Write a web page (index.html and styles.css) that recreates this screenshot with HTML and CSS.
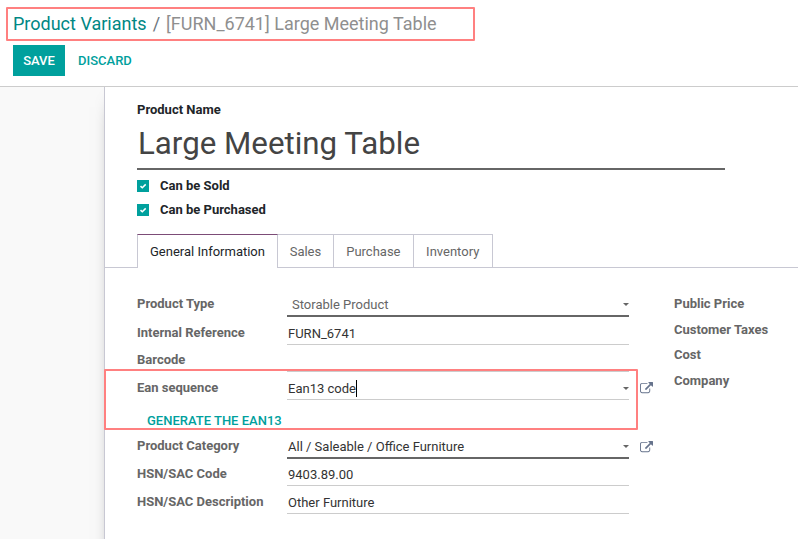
FILE: index.html
```html
<!DOCTYPE html>
<html lang="en">
<head>
<meta charset="utf-8">
<title>Product Variants</title>
<link rel="stylesheet" href="styles.css">
</head>
<body>
<svg class="defs" aria-hidden="true">
  <symbol id="external" viewBox="0 0 1792 1792"><path d="M1408 928v320q0 119-84.500 203.500t-203.500 84.500h-832q-119 0-203.500-84.500t-84.500-203.500v-832q0-119 84.500-203.500t203.500-84.500h704q14 0 23 9t9 23v64q0 14-9 23t-23 9h-704q-66 0-113 47t-47 113v832q0 66 47 113t113 47h832q66 0 113-47t47-113v-320q0-14 9-23t23-9h64q14 0 23 9t9 23zm384-864v512q0 26-19 45t-45 19-45-19l-176-176-652 652q-10 10-23 10t-23-10l-114-114q-10-10-10-23t10-23l652-652-176-176q-19-19-19-45t19-45 45-19h512q26 0 45 19t19 45z"/></symbol>
  <symbol id="check" viewBox="0 0 12 12"><path d="M3.500 6.100 5.300 7.800 8.700 4.400" fill="none" stroke="#fff" stroke-width="1.500"/></symbol>
</svg>
<header class="control-panel">
  <nav class="breadcrumb"><a>Product Variants</a><span class="slash">/</span><span class="current">[FURN_6741] Large Meeting Table</span></nav>
  <div class="buttons"><button class="save">SAVE</button><button class="discard">DISCARD</button></div>
</header>
<main class="content">
  <section class="sheet">
    <div class="title">
      <label class="title-label">Product Name</label>
      <div class="title-input">Large Meeting Table</div>
      <div class="option"><svg class="checkbox"><use href="#check"/></svg><span>Can be Sold</span></div>
      <div class="option"><svg class="checkbox"><use href="#check"/></svg><span>Can be Purchased</span></div>
    </div>
    <nav class="tabs"><a class="tab active">General Information</a><a class="tab sales">Sales</a><a class="tab">Purchase</a><a class="tab">Inventory</a></nav>
    <div class="groups">
      <div class="group">
        <div class="row type"><label>Product Type</label><div class="field required select">Storable Product<i class="caret"></i></div></div>
        <div class="row"><label>Internal Reference</label><div class="field">FURN_6741</div></div>
        <div class="row barcode"><label>Barcode</label><div class="field"></div></div>
        <div class="row"><label>Ean sequence</label><div class="field">Ean13 code<i class="cursor"></i><i class="caret"></i></div><svg class="external"><use href="#external"/></svg></div>
        <div class="action"><button class="generate">GENERATE THE EAN13</button></div>
        <div class="row category"><label>Product Category</label><div class="field required">All / Saleable / Office Furniture<i class="caret"></i></div><svg class="external"><use href="#external"/></svg></div>
        <div class="row code"><label>HSN/SAC Code</label><div class="field">9403.89.00</div></div>
        <div class="row"><label>HSN/SAC Description</label><div class="field">Other Furniture</div></div>
      </div>
      <div class="side">
        <label>Public Price</label><label>Customer Taxes</label><label>Cost</label><label>Company</label>
      </div>
    </div>
  </section>
</main>
<div class="highlight highlight-path"></div>
<div class="highlight highlight-ean"></div>
</body>
</html>
```

FILE: styles.css
```css
* { box-sizing: border-box; }
body { margin: 0; width: 798px; height: 539px; overflow: hidden; position: relative; background: #fff; color: #333; font: 13px/18px Roboto, "Liberation Sans", sans-serif; }
button { border: 0; padding: 0; background: none; font: 500 13px/18px Roboto, sans-serif; color: #00a09d; }
.defs { display: none; }
.control-panel { height: 87px; padding: 12px 13px 0; border-bottom: 1px solid #ccc; }
.breadcrumb { height: 33px; font-size: 18px; line-height: 24px; color: #8f8f8f; white-space: nowrap; }
.breadcrumb a { color: #008784; }
.slash { padding: 0 6px; color: #6c757d; }
.buttons { display: flex; }
.save { width: 52px; height: 31px; background: #00a09d; color: #fff; }
.discard { height: 31px; margin-left: 13px; }
.content { display: flex; height: 452px; padding-left: 104px; background: #f9f9f9; overflow: hidden; }
.sheet { flex: 1; height: 500px; background: #fff; border-left: 1px solid #c8c8d3; box-shadow: 0 5px 20px -15px #000; }
.title { height: 147px; padding: 14px 0 0 32px; color: #212529; }
.title-label { display: block; font-weight: 700; }
.title-input { width: 588px; height: 51px; padding: 4px 1px 0; border-bottom: 2px solid #666; font-size: 31.280px; line-height: 41px; color: #444; }
.option { display: flex; align-items: center; height: 24px; margin-top: 1px; padding-top: 6px; font-weight: 700; }
.option + .option { margin-top: 0; }
.checkbox { width: 12px; height: 12px; margin-right: 11px; background: #00a09d; }
.tabs { display: flex; height: 34px; padding-left: 32px; border-bottom: 1px solid #c8c8d3; }
.tab { height: 33px; padding: 8px 12.300px 0; border: solid #c8c8d3; border-width: 1px 1px 0 0; line-height: 17px; color: #666; }
.tab.sales { padding: 8px 11.700px 0; }
.tab.active { height: 34px; padding: 8px 12px 0; border-left-width: 1px; border-top-color: #7c4c77; background: #fff; color: #212529; }
.groups { display: flex; padding: 20px 0 0 32px; }
.group { width: 537px; }
.row { display: flex; align-items: flex-end; height: 28px; }
.row.type { height: 29px; }
.row.barcode, .row.code { height: 27px; }
.row label { width: 150px; padding-bottom: 3px; font-weight: 700; color: #666; }
.row.type label, .row.category label { padding-bottom: 4px; }
.field { position: relative; width: 342px; height: 23px; padding: 3px 1px 0; border-bottom: 1px solid #ccc; white-space: nowrap; }
.field.required { height: 24px; border-bottom: 2px solid #666; }
.field.select { padding-left: 5px; color: #666; }
.caret { position: absolute; right: 0; top: 10px; border: 3px solid transparent; border-top-color: #666; border-bottom: 0; }
.cursor { display: inline-block; width: 1px; height: 17px; vertical-align: -4px; background: #000; }
.external { width: 13px; height: 13px; margin: 0 0 5px 11px; fill: #66738c; }
.action { height: 31px; padding: 12px 0 0 10px; }
.generate { display: block; }
.side label { display: block; height: 25.700px; font-weight: 700; color: #666; }
.side { padding-top: 7px; }
.highlight { position: absolute; border: 2px solid #ff8080; border-radius: 1px; }
.highlight-path { left: 6px; top: 7px; width: 469px; height: 34px; }
.highlight-ean { left: 104px; top: 369px; width: 534px; height: 61px; }
```
